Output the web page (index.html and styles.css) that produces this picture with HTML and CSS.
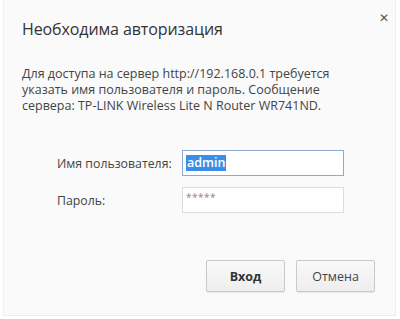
FILE: index.html
```html
<!DOCTYPE html>
<html lang="ru">
<head>
<meta charset="utf-8">
<link rel="stylesheet" href="styles.css">
</head>
<body>
<div class="dialog">
  <div class="head">
    <h1 class="title">Необходима авторизация</h1>
    <span class="close">✕</span>
  </div>
  <p class="msg">Для доступа на сервер http://192.168.0.1 требуется указать имя пользователя и пароль. Сообщение сервера: TP-LINK Wireless Lite N Router WR741ND.</p>
  <div class="form">
    <div class="row">
      <span class="label">Имя пользователя:</span>
      <div class="field focus"><span class="sel">admin</span></div>
    </div>
    <div class="row">
      <span class="label">Пароль:</span>
      <div class="field"><span class="pw">*****</span></div>
    </div>
  </div>
  <div class="actions">
    <button class="btn primary">Вход</button>
    <button class="btn">Отмена</button>
  </div>
</div>
</body>
</html>
```
FILE: styles.css
```css
html, body {
  margin: 0;
  padding: 0;
  background: #ffffff;
}
body {
  width: 400px;
  height: 319px;
  font-family: "Open Sans", "Noto Sans", "DejaVu Sans", sans-serif;
  color: #444;
}
.dialog {
  box-sizing: border-box;
  margin-left: 3px;
  width: 393px;
  height: 316px;
  background: #fafafa;
  border: 1px solid #efefef;
  border-top: none;
  padding: 0 18px 0 18px;
  display: flex;
  flex-direction: column;
}
.head {
  display: flex;
  justify-content: space-between;
  align-items: flex-start;
  height: 58px;
}
.title {
  margin: 18px 0 0 0;
  font-size: 16px;
  font-weight: 400;
  color: #333;
  letter-spacing: -0.1px;
}
.close {
  margin-top: 9px;
  margin-right: -12px;
  font-size: 12px;
  font-weight: 700;
  color: #555;
}
.msg {
  margin: 8px 0 0 0;
  font-size: 12.5px;
  line-height: 16px;
  color: #444;
  width: 318px;
}
.form {
  margin-top: 36px;
  padding-left: 35px;
  display: flex;
  flex-direction: column;
  gap: 11px;
}
.row {
  display: flex;
  align-items: center;
}
.label {
  width: 125px;
  font-size: 12.3px;
  color: #444;
}
.field {
  box-sizing: border-box;
  width: 162px;
  height: 26px;
  border: 1px solid #dcdcdc;
  background: #fff;
  display: flex;
  align-items: center;
  padding-left: 3px;
  font-size: 12.5px;
}
.field.focus {
  border-color: #8fa8cf;
}
.sel {
  background: #3a8ee6;
  color: #fff;
  font-weight: 600;
  line-height: 16px;
  padding: 0 1px;
}
.pw {
  color: #888;
  font-size: 10px;
  margin-top: -6px;
  letter-spacing: 0.5px;
}
.actions {
  margin-top: 47px;
  display: flex;
  justify-content: flex-end;
  gap: 11px;
  padding-right: 2px;
}
.btn {
  box-sizing: border-box;
  width: 79px;
  height: 32px;
  border: 1px solid #c9c9c9;
  border-radius: 2px;
  background: linear-gradient(#f9f9f9, #eeeeee);
  box-shadow: 0 1px 1px rgba(0,0,0,0.08);
  font-family: inherit;
  font-size: 12.5px;
  color: #444;
  padding: 0;
}
.btn.primary {
  font-weight: 700;
  color: #333;
}
```
